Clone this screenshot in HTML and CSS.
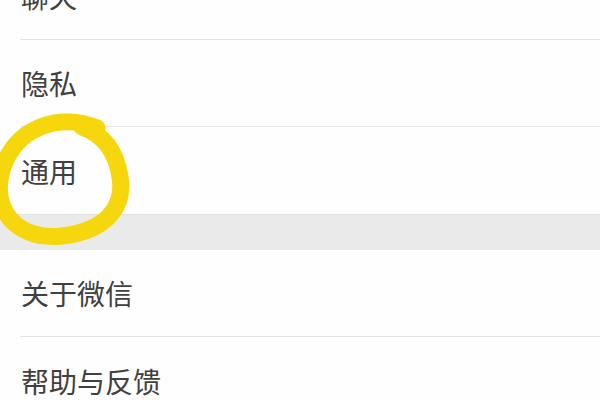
FILE: index.html
```html
<!DOCTYPE html>
<html lang="zh-CN">
<head>
    <meta charset="UTF-8">
    <meta name="viewport" content="width=device-width, initial-scale=1.0">
    <title>设置</title>
    <link rel="stylesheet" href="styles.css">
</head>
<body>
    <div class="page">
        <ul class="group">
            <li class="cell"><span>聊天</span></li>
            <li class="cell"><span>隐私</span></li>
            <li class="cell last"><span>通用</span></li>
        </ul>
        <div class="gap"></div>
        <ul class="group">
            <li class="cell"><span>关于微信</span></li>
            <li class="cell last"><span>帮助与反馈</span></li>
        </ul>
        <svg class="mark" width="140" height="140" viewBox="0 110 140 140">
            <path d="M97 128 C 60 113, 16 126, 2 170 C -10 214, 22 241, 62 236 C 106 231, 125 207, 120 177 C 116 150, 102 134, 82 127"
                  fill="none" stroke="#f6d60c" stroke-width="17" stroke-linecap="round"/>
        </svg>
    </div>
</body>
</html>
```

FILE: styles.css
```css
*{
    padding: 0px;
    margin: 0px;
    list-style: none;
}
body{
    width: 600px;
    height: 400px;
    overflow: hidden;
    background-color: #fff;
    font-family: "Noto Sans CJK SC", "Noto Sans", sans-serif;
}
.page{
    position: relative;
    margin-top: -47px;
}
.group{
    background-color: #fefefe;
}
.group .cell{
    height: 86px;
    margin-left: 20px;
    padding-left: 1px;
    display: flex;
    align-items: center;
    border-bottom: 1px solid #e4e4e4;
    font-size: 28px;
    color: #404040;
}
.group .last{
    border-bottom: none;
    height: 87px;
}
.gap{
    height: 35px;
    background-color: #eaeaea;
    border-top: 1px solid #e4e4e4;
}
.mark{
    position: absolute;
    left: 0px;
    top: 157px;
}
```
